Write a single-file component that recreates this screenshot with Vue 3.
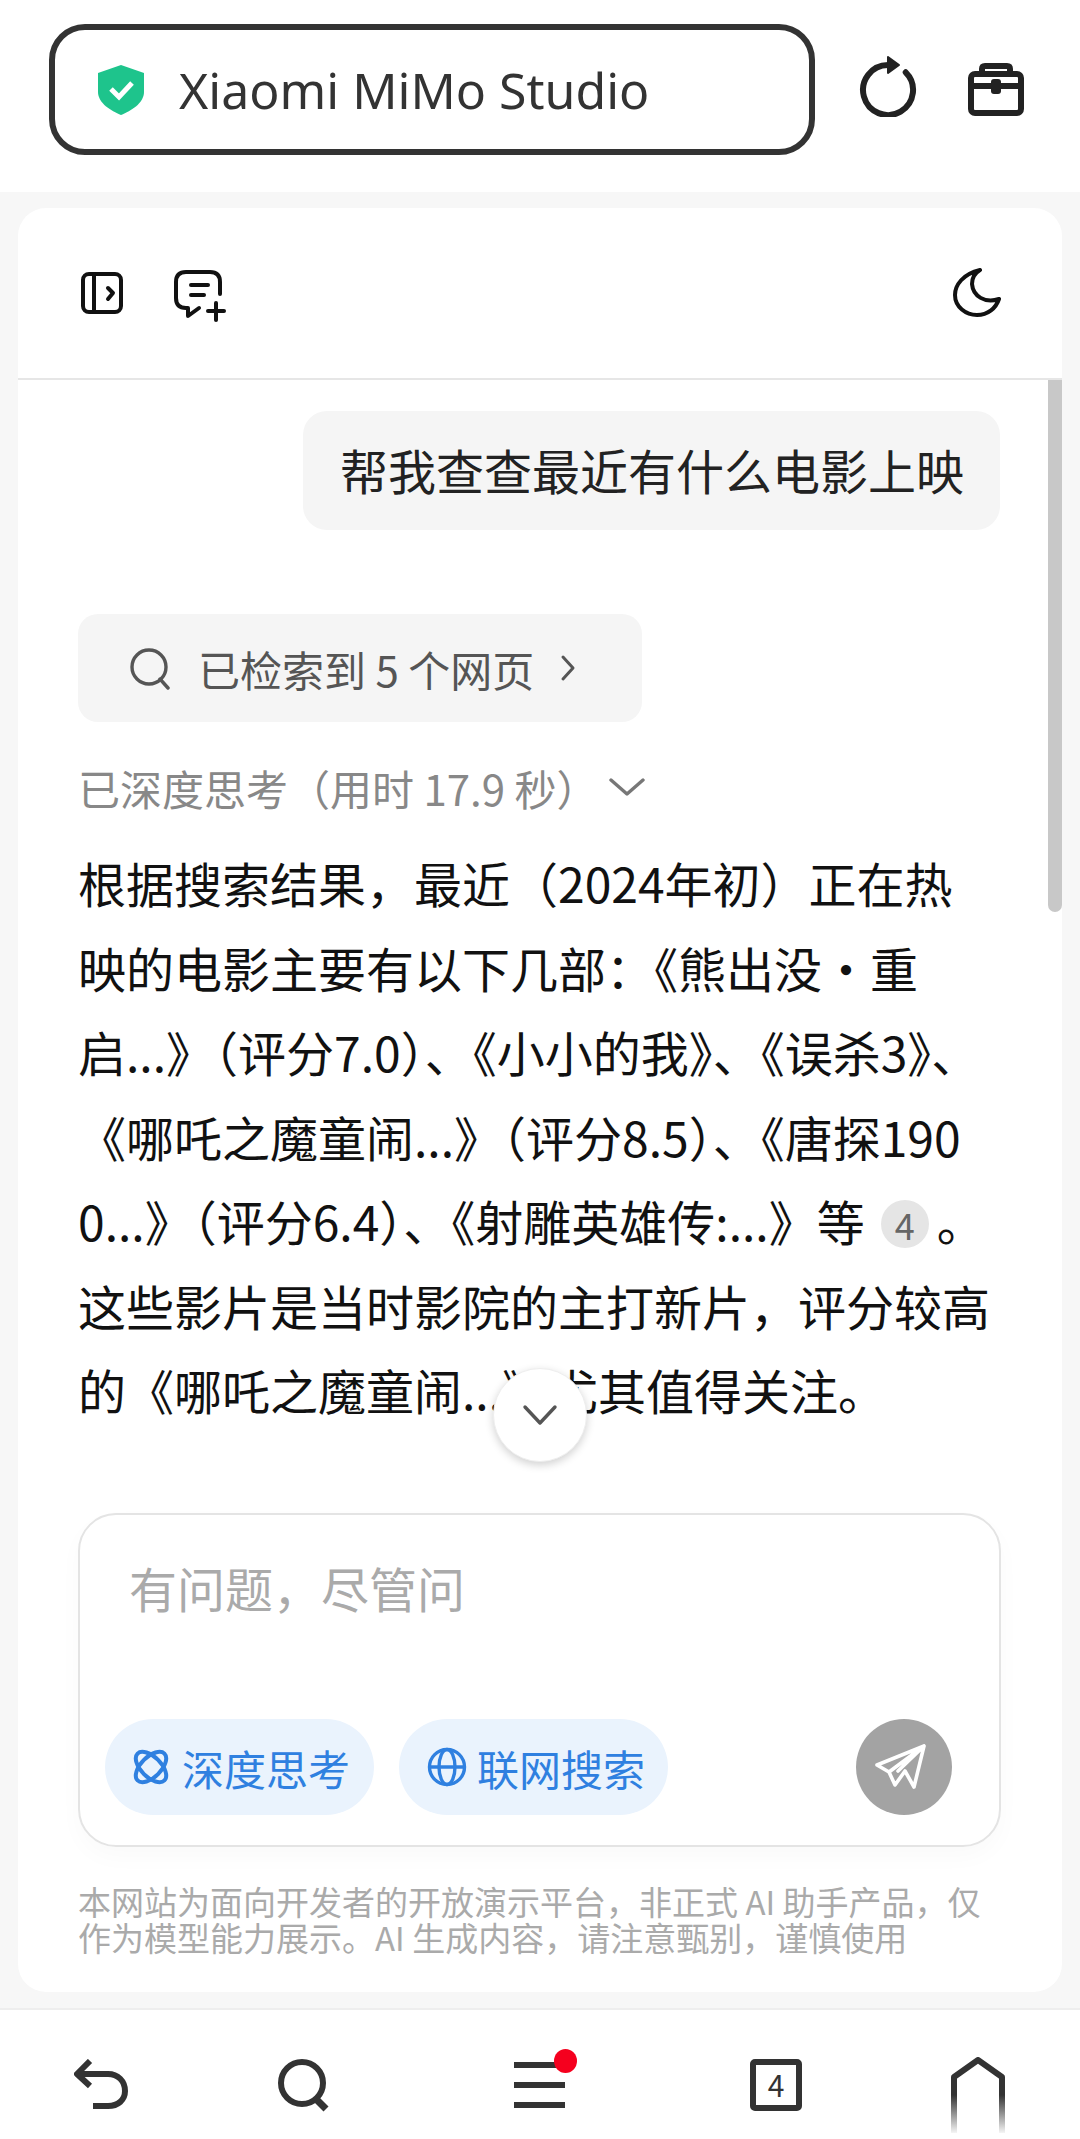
<template>
  <div class="page">
    <header class="topbar">
      <div class="address">
        <svg class="shield" viewBox="0 0 46 50" width="46" height="50">
          <path d="M23 0 L46 8 V27 C46 38 33 46 23 50 C13 46 0 38 0 27 V8 Z" fill="#1ec48c" />
          <path d="M13 24 L21 32 L34 18" fill="none" stroke="#fff" stroke-width="5" />
        </svg>
        <span class="site">Xiaomi MiMo Studio</span>
      </div>
      <svg class="refresh" viewBox="0 0 60 64" width="60" height="64">
        <path d="M47.7 19.3 A25 25 0 1 1 30 12" fill="none" stroke="#222" stroke-width="6" stroke-linecap="round" />
        <path d="M30 4 L41 12 L30 20 Z" fill="#222" stroke="#222" stroke-width="2" stroke-linejoin="round" />
      </svg>
      <svg class="toolbox" viewBox="0 0 60 56" width="60" height="56">
        <g fill="none" stroke="#222" stroke-width="6" stroke-linejoin="round">
          <rect x="5" y="11" width="50" height="39" rx="4" />
          <path d="M16 10 V6 Q16 3 19 3 H41 Q44 3 44 6 V10" />
          <path d="M5 23 H55" />
        </g>
        <rect x="25" y="16" width="10" height="15" rx="3" fill="#222" />
      </svg>
    </header>

    <div class="stage">
      <section class="card">
        <div class="card-head">
          <svg viewBox="0 0 48 48" width="48" height="48">
            <g fill="none" stroke="#111" stroke-width="4" stroke-linecap="round" stroke-linejoin="round">
              <rect x="5" y="5" width="38" height="38" rx="6" />
              <path d="M16 5 V43" />
              <path d="M30 19 L35 24 L30 30" />
            </g>
          </svg>
          <svg class="chat-icon" viewBox="0 0 56 52" width="56" height="52">
            <g fill="none" stroke="#111" stroke-width="4" stroke-linecap="round" stroke-linejoin="round">
              <path d="M48 24 V12 Q48 2 38 2 H14 Q4 2 4 12 V28 Q4 38 14 38 H16 V46 L27 38" />
              <path d="M19 15 H36" />
              <path d="M19 25 H32" />
              <path d="M44 33 V50" />
              <path d="M36 41 H52" />
            </g>
          </svg>
          <svg class="moon" viewBox="0 0 48 50" width="48" height="50">
            <path d="M27 2 C10 6 2 17 2 27 C2 39 13 47 24 47 C35 47 43 40 46 31 C32 36 20 28 19 16 C19 10 22 5 27 2 Z" fill="none" stroke="#111" stroke-width="4" stroke-linejoin="round" />
          </svg>
        </div>

        <div class="chat">
          <div class="bubble">帮我查查最近有什么电影上映</div>

          <div class="sources">
            <svg viewBox="0 0 44 44" width="44" height="44">
              <circle cx="21" cy="21" r="17" fill="none" stroke="#555" stroke-width="3.4" />
              <path d="M32 33 L40 42" stroke="#555" stroke-width="3.4" stroke-linecap="round" />
            </svg>
            <span>已检索到 5 个网页</span>
            <svg class="sources-arrow" viewBox="0 0 16 28" width="16" height="28">
              <path d="M3 3 L13 14 L3 25" fill="none" stroke="#555" stroke-width="3" stroke-linecap="round" stroke-linejoin="round" />
            </svg>
          </div>

          <div class="thinking">
            <span>已深度思考（用时 17.9 秒）</span>
            <svg viewBox="0 0 36 20" width="36" height="20">
              <path d="M2 3 L18 17 L34 3" fill="none" stroke="#777" stroke-width="3.4" stroke-linecap="round" stroke-linejoin="round" />
            </svg>
          </div>

          <div class="answer">
            <div v-for="line in lines" :key="line.text" class="answer-line">
              {{ line.text }}<template v-if="line.cite"><span class="cite">{{ line.cite }}</span>。</template>
            </div>
          </div>

          <div class="scrollbar"></div>
          <button class="to-bottom">
            <svg viewBox="0 0 36 22" width="36" height="22">
              <path d="M3 3 L18 19 L33 3" fill="none" stroke="#555" stroke-width="3.4" stroke-linecap="round" stroke-linejoin="round" />
            </svg>
          </button>
        </div>

        <div class="composer">
          <div class="placeholder">有问题，尽管问</div>
          <div class="composer-row">
            <div class="chip">
              <svg viewBox="0 0 36 36" width="36" height="36">
                <g fill="none" stroke="#2f80e0" stroke-width="4">
                  <ellipse cx="18" cy="18" rx="19" ry="10" transform="rotate(45 18 18)" />
                  <ellipse cx="18" cy="18" rx="19" ry="10" transform="rotate(-45 18 18)" />
                </g>
              </svg>
              <span>深度思考</span>
            </div>
            <div class="chip chip-web">
              <svg viewBox="0 0 40 40" width="40" height="40">
                <g fill="none" stroke="#2f80e0" stroke-width="3.4">
                  <circle cx="20" cy="20" r="17.5" />
                  <ellipse cx="20" cy="20" rx="8" ry="17.5" />
                  <path d="M2.5 20 H37.5" />
                </g>
              </svg>
              <span>联网搜索</span>
            </div>
            <button class="send">
              <svg viewBox="0 0 96 96" width="96" height="96">
                <path d="M68 27 L21 46 L33 53 L39 66 L49 52 L58 68 Z M68 27 L33 53 M68 27 L42 52" fill="none" stroke="#fff" stroke-width="3.6" stroke-linejoin="round" stroke-linecap="round" />
              </svg>
            </button>
          </div>
        </div>

        <p class="notice">本网站为面向开发者的开放演示平台，非正式 AI 助手产品，仅作为模型能力展示。AI 生成内容，请注意甄别，谨慎使用</p>
      </section>
    </div>

    <nav class="bottombar">
      <svg class="nav-back" viewBox="0 0 56 56" width="56" height="56">
        <path d="M16 2 L3 15 L16 27 M3 15 H34 C44 15 51 22 51 32 C51 41 44 47 34 47 H19" fill="none" stroke="#333" stroke-width="6" stroke-linejoin="round" />
      </svg>
      <svg class="nav-search" viewBox="0 0 56 56" width="56" height="56">
        <circle cx="26" cy="25" r="21" fill="none" stroke="#333" stroke-width="6" />
        <path d="M40 41 L50 51" stroke="#333" stroke-width="7" />
      </svg>
      <div class="nav-menu">
        <i></i><i></i><i></i>
        <b class="dot"></b>
      </div>
      <div class="nav-tabs">4</div>
      <svg class="nav-home" viewBox="0 0 56 76" width="56" height="76">
        <defs>
          <linearGradient id="home-fade" x1="0" y1="0" x2="0" y2="76" gradientUnits="userSpaceOnUse">
            <stop offset="0.5" stop-color="#333" />
            <stop offset="1" stop-color="#333" stop-opacity="0.05" />
          </linearGradient>
        </defs>
        <path d="M3 76 V20 L27 3 L51 20 V76" fill="none" stroke="url(#home-fade)" stroke-width="6" stroke-linejoin="round" />
      </svg>
    </nav>
  </div>
</template>

<script setup>
const lines = [
  { text: "根据搜索结果，最近（2024年初）正在热" },
  { text: "映的电影主要有以下几部：《熊出没・重" },
  { text: "启...》（评分7.0）、《小小的我》、《误杀3》、" },
  { text: "《哪吒之魔童闹...》（评分8.5）、《唐探190" },
  { text: "0...》（评分6.4）、《射雕英雄传:...》等", cite: "4" },
  { text: "这些影片是当时影院的主打新片，评分较高" },
  { text: "的《哪吒之魔童闹...》尤其值得关注。" },
];
</script>

<style>
html,
body {
  margin: 0;
  background: #fff;
}
</style>

<style scoped>
.page {
  width: 1080px;
  height: 2139px;
  display: flex;
  flex-direction: column;
  overflow: hidden;
  background: #fff;
  font-family: "Noto Sans CJK SC", "Noto Sans", sans-serif;
}

.topbar {
  height: 192px;
  flex: none;
  display: flex;
  align-items: flex-start;
  padding: 24px 0 0 49px;
  box-sizing: border-box;
}

.address {
  width: 766px;
  height: 131px;
  box-sizing: border-box;
  border: 6px solid #333;
  border-radius: 36px;
  display: flex;
  align-items: center;
  padding-left: 43px;
}

.site {
  margin-left: 35px;
  font-family: "Noto Sans", sans-serif;
  font-size: 50px;
  color: #333;
}

.refresh {
  margin: 29px 0 0 43px;
}

.toolbox {
  margin: 39px 0 0 48px;
}

.stage {
  height: 1818px;
  flex: none;
  box-sizing: border-box;
  padding: 16px 18px;
  background: #f7f7f7;
  border-bottom: 2px solid #eee;
}

.card {
  height: 100%;
  background: #fff;
  border-radius: 28px;
  display: flex;
  flex-direction: column;
}

.card-head {
  height: 172px;
  flex: none;
  box-sizing: border-box;
  border-bottom: 2px solid #e6e6e6;
  display: flex;
  align-items: center;
  padding: 0 61px 0 60px;
}

.chat-icon {
  margin: 6px 0 0 46px;
}

.moon {
  margin-left: auto;
}

.chat {
  position: relative;
  height: 1133px;
  flex: none;
  box-sizing: border-box;
  padding: 31px 62px 0 60px;
}

.bubble {
  width: 697px;
  height: 119px;
  margin-left: auto;
  box-sizing: border-box;
  padding-left: 37px;
  background: #f5f5f5;
  border-radius: 24px;
  font-size: 48px;
  line-height: 117px;
  color: #222;
  white-space: nowrap;
}

.sources {
  width: 564px;
  height: 108px;
  margin-top: 84px;
  box-sizing: border-box;
  padding-left: 50px;
  background: #f5f5f5;
  border-radius: 20px;
  display: flex;
  align-items: center;
  font-size: 42px;
  color: #555;
}

.sources span {
  margin-left: 26px;
}

.sources-arrow {
  margin-left: 26px;
}

.thinking {
  height: 58px;
  margin-top: 36px;
  display: flex;
  align-items: center;
  font-size: 42px;
  color: #888;
}

.thinking svg {
  margin-left: 11px;
}

.answer {
  margin-top: 24px;
  font-size: 48px;
  line-height: 84.5px;
  color: #111;
}

.answer-line {
  white-space: nowrap;
}

.cite {
  display: inline-block;
  width: 48px;
  height: 48px;
  margin: 0 8px 0 16px;
  border-radius: 50%;
  background: #e5e5e5;
  font-size: 36px;
  line-height: 48px;
  text-align: center;
  color: #666;
  vertical-align: 1px;
}

.scrollbar {
  position: absolute;
  top: 0;
  right: 0;
  width: 14px;
  height: 532px;
  background: #c8c8c8;
  border-radius: 0 0 7px 7px;
}

.to-bottom {
  position: absolute;
  left: 475px;
  top: 988px;
  width: 94px;
  height: 94px;
  padding: 0;
  border: 1px solid #eee;
  border-radius: 50%;
  background: #fff;
  box-shadow: 0 3px 8px rgba(0, 0, 0, 0.18);
  display: flex;
  align-items: center;
  justify-content: center;
}

.composer {
  width: 923px;
  height: 334px;
  flex: none;
  margin-left: 60px;
  box-sizing: border-box;
  border: 2px solid #e4e4e4;
  border-radius: 38px;
  box-shadow: 0 10px 24px rgba(0, 0, 0, 0.025);
  padding: 0 47px 30px 25px;
  display: flex;
  flex-direction: column;
}

.placeholder {
  margin: 42px 0 0 24px;
  font-size: 48px;
  line-height: 60px;
  color: #aaa;
}

.composer-row {
  margin-top: auto;
  display: flex;
  align-items: center;
  gap: 25px;
}

.chip {
  width: 269px;
  height: 96px;
  box-sizing: border-box;
  padding-left: 28px;
  background: #eaf3fd;
  border-radius: 48px;
  display: flex;
  align-items: center;
  gap: 13px;
  font-size: 42px;
  color: #2f80e0;
}

.chip-web {
  gap: 10px;
}

.send {
  width: 96px;
  height: 96px;
  margin-left: auto;
  padding: 0;
  border: none;
  border-radius: 50%;
  background: #a3a3a3;
}

.send svg {
  display: block;
}

.notice {
  width: 915px;
  margin: 36px 0 0 60px;
  font-size: 33px;
  line-height: 36px;
  color: #aaa;
}

.bottombar {
  flex: 1;
  position: relative;
  background: #fff;
}

.bottombar > * {
  position: absolute;
}

.nav-back {
  left: 74px;
  top: 49px;
}

.nav-search {
  left: 276px;
  top: 48px;
}

.nav-menu {
  left: 514px;
  top: 52px;
  width: 51px;
  height: 46px;
  display: flex;
  flex-direction: column;
  justify-content: space-between;
}

.nav-menu i {
  display: block;
  height: 6px;
  background: #333;
}

.dot {
  position: absolute;
  top: -13px;
  left: 40px;
  width: 23px;
  height: 24px;
  border-radius: 50%;
  background: #f5001e;
}

.nav-tabs {
  left: 750px;
  top: 49px;
  width: 52px;
  height: 52px;
  box-sizing: border-box;
  border: 6px solid #333;
  border-radius: 5px;
  text-align: center;
  font-size: 30px;
  line-height: 38px;
  color: #333;
}

.nav-home {
  left: 951px;
  top: 47px;
}
</style>
